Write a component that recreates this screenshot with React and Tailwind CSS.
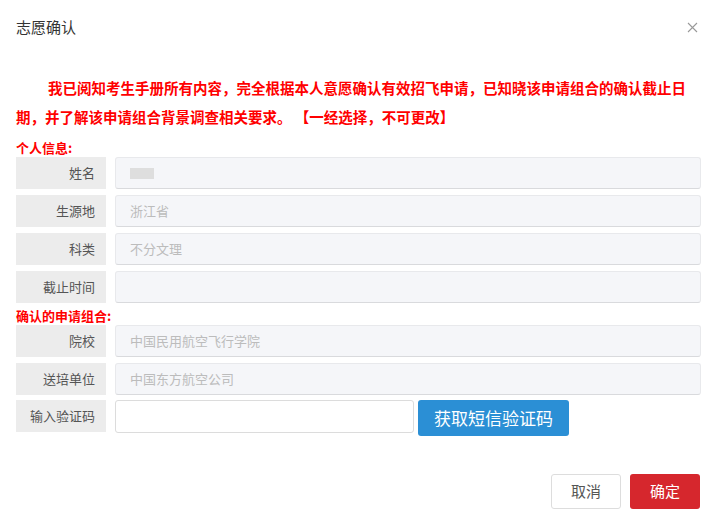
import { useState } from 'react';

const FONT = { fontFamily: '"Noto Sans CJK SC", "Noto Sans", sans-serif' };

const PERSONAL = [
    { label: '姓名', value: null, masked: true },
    { label: '生源地', value: '浙江省' },
    { label: '科类', value: '不分文理' },
    { label: '截止时间', value: '' },
];

const GROUP = [
    { label: '院校', value: '中国民用航空飞行学院' },
    { label: '送培单位', value: '中国东方航空公司' },
];

function Label({ children }) {
    return (
        <div className="w-[90px] shrink-0 bg-[#ececec] flex items-center justify-end pr-[11px] text-[13px] text-[#555]">
            {children}
        </div>
    );
}

function Row({ label, value, masked }) {
    return (
        <div className="flex h-[32px]">
            <Label>{label}</Label>
            <div className="ml-[9px] flex-1 flex items-center rounded-[3px] border border-[#e8e9ec] border-b-[#d9dadd] bg-[#f5f6f9] pl-[14px] text-[13px] text-[#bcbcbc]">
                {masked ? <span className="block w-[24px] h-[11px] bg-[#dedede]"></span> : value}
            </div>
        </div>
    );
}

export default function App() {
    const [code, setCode] = useState('');

    return (
        <div className="w-[717px] h-[523px] bg-white relative overflow-hidden" style={FONT}>
            {/* header */}
            <div className="px-4 pt-[17px] flex items-center justify-between">
                <h2 className="text-[15px] leading-5 text-[#333]">志愿确认</h2>
                <button className="text-[#999] mr-[3px]">
                    <svg width="11" height="11" viewBox="0 0 11 11" stroke="currentColor" strokeWidth="1.1" fill="none">
                        <path d="M1 1L10 10M10 1L1 10" />
                    </svg>
                </button>
            </div>

            <p className="mt-[36px] pl-4 pr-[10px] text-[14.5px] leading-[29px] font-bold text-[#f00] indent-[32px]">
                我已阅知考生手册所有内容，完全根据本人意愿确认有效招飞申请，已知晓该申请组合的确认截止日期，并了解该申请组合背景调查相关要求。 【一经选择，不可更改】
            </p>

            <div className="px-4 mt-[9px]">
                <div className="text-[13px] leading-4 font-bold text-[#f00]">个人信息:</div>
                <div className="mt-[1px] flex flex-col gap-[6px]">
                    {PERSONAL.map((r) => (
                        <Row key={r.label} {...r} />
                    ))}
                </div>

                <div className="mt-[5px] text-[13px] leading-4 font-bold text-[#f00]">确认的申请组合:</div>
                <div className="mt-[1px] flex flex-col gap-[6px]">
                    {GROUP.map((r) => (
                        <Row key={r.label} {...r} />
                    ))}
                    <div className="flex h-[32px] mt-[-1px]">
                        <Label>输入验证码</Label>
                        <input
                            value={code}
                            onChange={(e) => setCode(e.target.value)}
                            className="ml-[9px] w-[299px] h-[33px] rounded-[3px] border border-[#dcdcdc] bg-white px-3 text-[13px] outline-none"
                        />
                        <button className="ml-[4px] w-[151px] h-[36px] rounded-[3px] bg-[#2b8fd5] text-white text-[17px]">
                            获取短信验证码
                        </button>
                    </div>
                </div>
            </div>

            {/* footer */}
            <div className="absolute right-[17px] top-[474px] flex gap-[9px]">
                <button className="w-[70px] h-[35px] rounded-[3px] border border-[#ddd] bg-white text-[15px] text-[#555]">取消</button>
                <button className="w-[70px] h-[35px] rounded-[3px] bg-[#d6272d] text-[15px] text-white">确定</button>
            </div>
        </div>
    );
}
